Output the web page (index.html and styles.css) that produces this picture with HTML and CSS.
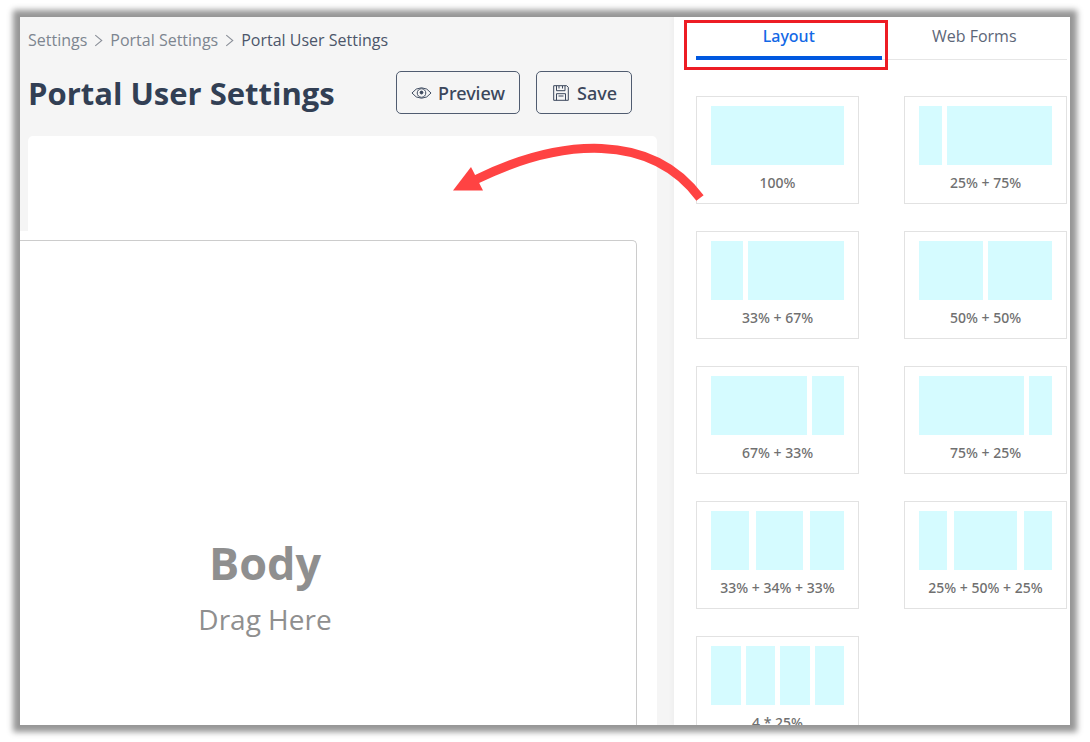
FILE: index.html
```
<!DOCTYPE html>
<html lang="en">
<head>
  <meta charset="UTF-8">
  <meta name="viewport" content="width=device-width, initial-scale=1.0">
  <title>Portal User Settings</title>
  <link rel="stylesheet" href="styles.css">
</head>
<body>

<div class="window">

  <!-- Page editor -->
  <main class="editor">
    <nav class="breadcrumb" aria-label="Breadcrumb">
      <a href="#">Settings</a>
      <svg class="chevron" viewBox="0 0 8 12"><path d="M1 1l6 5-6 5"/></svg>
      <a href="#">Portal Settings</a>
      <svg class="chevron" viewBox="0 0 8 12"><path d="M1 1l6 5-6 5"/></svg>
      <a href="#" class="current">Portal User Settings</a>
    </nav>

    <header class="page-header">
      <h1>Portal User Settings</h1>
      <div class="actions">
        <button type="button" class="btn">
          <svg class="icon-eye" viewBox="0 0 22 14">
            <path d="M1 7Q5 1.500 11 1.500T21 7Q17 12.500 11 12.500T1 7z"/>
            <circle cx="11" cy="7" r="4.500"/>
            <circle class="pupil" cx="11" cy="6.500" r="1.500"/>
          </svg>
          Preview
        </button>
        <button type="button" class="btn">
          <svg class="icon-save" viewBox="0 0 16 16">
            <path d="M.7.700h13l1.600 1.600v13H.7z"/>
            <path d="M3.500.700v5h8.500v-5M9.500 1v2.500M6 1v2.500M3.500 15.300V8.700h9v6.600M5.500 11h5"/>
          </svg>
          Save
        </button>
      </div>
    </header>

    <div class="canvas-top"></div>
    <div class="canvas">
      <section class="drop-zone">
        <h2>Body</h2>
        <p>Drag Here</p>
      </section>
    </div>
  </main>

  <!-- Layout blocks -->
  <aside class="sidebar">
    <div class="tabs" role="tablist">
      <button type="button" class="tab active" role="tab" aria-selected="true">Layout</button>
      <button type="button" class="tab" role="tab" aria-selected="false">Web Forms</button>
      <div class="highlight"></div>
    </div>

    <ul class="layouts">
      <li draggable="true">
        <div class="cols"><i></i></div>
        <span>100%</span>
      </li>
      <li draggable="true">
        <div class="cols cols-25-75"><i></i><i></i></div>
        <span>25% + 75%</span>
      </li>
      <li draggable="true">
        <div class="cols cols-33-67"><i></i><i></i></div>
        <span>33% + 67%</span>
      </li>
      <li draggable="true">
        <div class="cols cols-50-50"><i></i><i></i></div>
        <span>50% + 50%</span>
      </li>
      <li draggable="true">
        <div class="cols cols-67-33"><i></i><i></i></div>
        <span>67% + 33%</span>
      </li>
      <li draggable="true">
        <div class="cols cols-75-25"><i></i><i></i></div>
        <span>75% + 25%</span>
      </li>
      <li draggable="true">
        <div class="cols cols-33-34-33"><i></i><i></i><i></i></div>
        <span>33% + 34% + 33%</span>
      </li>
      <li draggable="true">
        <div class="cols cols-25-50-25"><i></i><i></i><i></i></div>
        <span>25% + 50% + 25%</span>
      </li>
      <li draggable="true">
        <div class="cols cols-4"><i></i><i></i><i></i><i></i></div>
        <span>4 * 25%</span>
      </li>
    </ul>
  </aside>

  <!-- Arrow from the first block to the canvas -->
  <svg class="arrow" viewBox="0 0 252 60">
    <path class="shaft" d="M24 37.500C109-4 199-10 248 56"/>
    <path class="head" d="M1 48.500L19 25 31 48.500z"/>
  </svg>
</div>

</body>
</html>
```
FILE: styles.css
```
* {
  box-sizing: border-box;
}

body {
  margin: 0;
  padding: 17px 20px;
  background-color: #ffffff;
  font-family: 'Open Sans', 'Noto Sans', sans-serif;
  color: #323f54;
}

h1, h2, p, ul {
  margin: 0;
  padding: 0;
}

button {
  font-family: inherit;
  cursor: pointer;
}

svg {
  fill: none;
  stroke: currentColor;
}

.window {
  position: relative;
  display: flex;
  height: calc(100vh - 34px);
  background-color: #ffffff;
  box-shadow: 0 0 6px 7px #969696;
}

/* Editor */
.editor {
  flex: 1;
  min-width: 0;
  display: flex;
  flex-direction: column;
  overflow: hidden;
  padding: 11px 17px 0 8px;
  background-color: #f5f5f5;
}

.breadcrumb {
  display: flex;
  align-items: center;
  gap: 7px;
  font-size: 16px;
  line-height: 24px;
}

.breadcrumb a {
  color: #7d8590;
  text-decoration: none;
}

.breadcrumb .current {
  color: #4c566a;
}

.chevron {
  width: 9px;
  height: 13px;
  color: #8a8f98;
}

.page-header {
  display: flex;
  justify-content: space-between;
  align-items: center;
  margin: 19px 25px 22px 0;
}

h1 {
  font-size: 31px;
  line-height: 42px;
}

.actions {
  display: flex;
  gap: 16px;
}

.btn {
  display: flex;
  align-items: center;
  gap: 6px;
  height: 43px;
  padding: 0 14px;
  border: 1px solid #505c70;
  border-radius: 5px;
  background-color: transparent;
  color: #3b475c;
  font-family: 'Noto Sans', sans-serif;
  font-size: 18px;
  font-weight: 500;
}

.icon-eye {
  width: 21px;
  height: 14px;
}

.icon-save {
  width: 16px;
  height: 16px;
  margin: 0 2px;
}

.icon-eye .pupil {
  fill: currentColor;
}

.canvas-top {
  flex: none;
  height: 95px;
  border-radius: 5px 5px 0 0;
  background-color: #ffffff;
}

/* The canvas is wider than the pane and runs off its left side */
.canvas {
  flex: 1;
  display: flex;
  margin-left: -135px;
  padding: 9px 20px 0 0;
  background-color: #ffffff;
}

.drop-zone {
  flex: 1;
  padding-top: 291px;
  border: 1px solid #cccccc;
  border-bottom: 0;
  border-radius: 5px 5px 0 0;
  color: #8f8f8f;
  text-align: center;
}

.drop-zone h2 {
  font-size: 45px;
  line-height: 62px;
}

.drop-zone p {
  font-size: 28px;
  line-height: 50px;
}

/* Sidebar */
.sidebar {
  flex: 0 0 396px;
  overflow: hidden;
  padding: 0 3px 0 22px;
  background-color: #ffffff;
  box-shadow: -2px 0 4px #eeeeee;
  clip-path: inset(0 0 0 -6px);
}

.tabs {
  position: relative;
  display: flex;
  height: 43px;
}

.tab {
  display: flex;
  flex: 1;
  align-items: flex-start;
  justify-content: center;
  padding: 8px 0 0;
  border: 0;
  border-bottom: 1px solid #e6e6e6;
  background-color: transparent;
  color: #5c6678;
  font-size: 16px;
}

.tab.active {
  border-bottom: 4px solid #0058e0;
  color: #1268e6;
  font-family: 'Noto Sans', sans-serif;
  font-weight: 500;
}

.highlight {
  position: absolute;
  top: 3px;
  left: -12px;
  width: calc(50% + 18px);
  height: 50px;
  border: 3px solid #ed1c24;
}

.layouts {
  display: grid;
  grid-template-columns: 163px 163px;
  justify-content: space-between;
  gap: 27px 0;
  margin-top: 36px;
  list-style: none;
}

.layouts li {
  height: 108px;
  padding: 9px 14px;
  border: 1px solid #e2e2e2;
  color: #707070;
  font-family: 'Noto Sans', sans-serif;
  font-size: 14px;
  font-weight: 500;
  line-height: 36px;
  text-align: center;
}

.cols {
  display: grid;
  gap: 5px;
  height: 59px;
}

.cols i {
  background-color: #d5fbff;
}

.cols-25-75 { grid-template-columns: 23fr 106fr; }
.cols-33-67 { grid-template-columns: 32fr 97fr; }
.cols-50-50 { grid-template-columns: 1fr 1fr; }
.cols-67-33 { grid-template-columns: 97fr 32fr; }
.cols-75-25 { grid-template-columns: 106fr 23fr; }
.cols-33-34-33 { grid-template-columns: 38fr 48fr 34fr; gap: 7px; }
.cols-25-50-25 { grid-template-columns: 28fr 64fr 28fr; gap: 7px; }
.cols-4 { grid-template-columns: repeat(4, 1fr); }

/* Arrow */
.arrow {
  position: absolute;
  top: 125px;
  right: 366px;
  width: 252px;
  height: 60px;
}

.arrow .shaft {
  stroke: #ff4343;
  stroke-width: 9;
}

.arrow .head {
  fill: #ff4343;
  stroke: none;
}
```
